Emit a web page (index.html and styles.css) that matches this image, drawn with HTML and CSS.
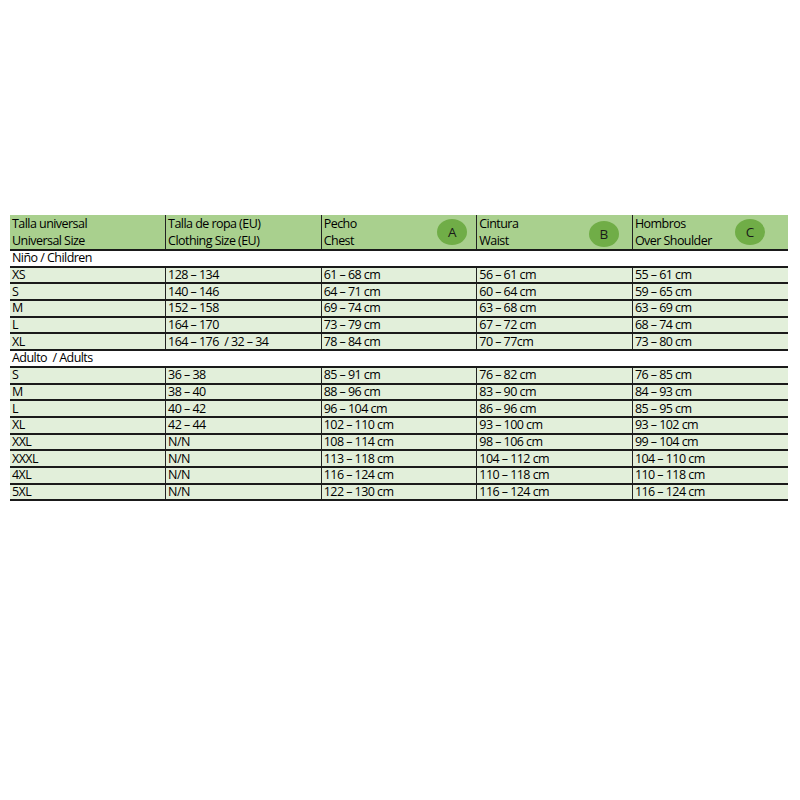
FILE: index.html
```
<!DOCTYPE html>
<html>
<head>
<meta charset="utf-8">
<link rel="stylesheet" href="styles.css">
</head>
<body>
<div class="page">
<table class="sizes">
<colgroup><col class="c"><col class="c"><col class="c"><col class="c"><col class="c"></colgroup>
<thead>
<tr class="head">
<th><div class="hc"><div class="ht">Talla universal<br>Universal Size</div></div></th>
<th class="vl"><div class="hc"><div class="ht">Talla de ropa (EU)<br>Clothing Size (EU)</div></div></th>
<th class="vl"><div class="hc"><div class="ht">Pecho<br>Chest</div><span class="dot da">A</span></div></th>
<th class="vl"><div class="hc"><div class="ht">Cintura<br>Waist</div><span class="dot db">B</span></div></th>
<th class="vl"><div class="hc"><div class="ht">Hombros<br>Over Shoulder</div><span class="dot dc">C</span></div></th>
</tr>
</thead>
<tbody>
<tr class="label"><td colspan="5">Niño / Children</td></tr>
<tr><td>XS</td><td class="vl">128 – 134</td><td class="vl">61 – 68 cm</td><td class="vl">56 – 61 cm</td><td class="vl">55 – 61 cm</td></tr>
<tr><td>S</td><td class="vl">140 – 146</td><td class="vl">64 – 71 cm</td><td class="vl">60 – 64 cm</td><td class="vl">59 – 65 cm</td></tr>
<tr><td>M</td><td class="vl">152 – 158</td><td class="vl">69 – 74 cm</td><td class="vl">63 – 68 cm</td><td class="vl">63 – 69 cm</td></tr>
<tr><td>L</td><td class="vl">164 – 170</td><td class="vl">73 – 79 cm</td><td class="vl">67 – 72 cm</td><td class="vl">68 – 74 cm</td></tr>
<tr><td>XL</td><td class="vl">164 – 176 &nbsp;/ 32 – 34</td><td class="vl">78 – 84 cm</td><td class="vl">70 – 77cm</td><td class="vl">73 – 80 cm</td></tr>
<tr class="label"><td colspan="5">Adulto &nbsp;/ Adults</td></tr>
<tr><td>S</td><td class="vl">36 – 38</td><td class="vl">85 – 91 cm</td><td class="vl">76 – 82 cm</td><td class="vl">76 – 85 cm</td></tr>
<tr><td>M</td><td class="vl">38 – 40</td><td class="vl">88 – 96 cm</td><td class="vl">83 – 90 cm</td><td class="vl">84 – 93 cm</td></tr>
<tr><td>L</td><td class="vl">40 – 42</td><td class="vl">96 – 104 cm</td><td class="vl">86 – 96 cm</td><td class="vl">85 – 95 cm</td></tr>
<tr><td>XL</td><td class="vl">42 – 44</td><td class="vl">102 – 110 cm</td><td class="vl">93 – 100 cm</td><td class="vl">93 – 102 cm</td></tr>
<tr><td>XXL</td><td class="vl">N/N</td><td class="vl">108 – 114 cm</td><td class="vl">98 – 106 cm</td><td class="vl">99 – 104 cm</td></tr>
<tr><td>XXXL</td><td class="vl">N/N</td><td class="vl">113 – 118 cm</td><td class="vl">104 – 112 cm</td><td class="vl">104 – 110 cm</td></tr>
<tr><td>4XL</td><td class="vl">N/N</td><td class="vl">116 – 124 cm</td><td class="vl">110 – 118 cm</td><td class="vl">110 – 118 cm</td></tr>
<tr><td>5XL</td><td class="vl">N/N</td><td class="vl">122 – 130 cm</td><td class="vl">116 – 124 cm</td><td class="vl">116 – 124 cm</td></tr>
</tbody>
</table>
</div>
</body>
</html>
```
FILE: styles.css
```
html, body {
  margin: 0;
  padding: 0;
  background: #ffffff;
}
.page {
  padding: 215px 0 0 10px;
}
.sizes {
  width: 778px;
  border-collapse: collapse;
  table-layout: fixed;
  font-family: "Open Sans", "Noto Sans", sans-serif;
  font-size: 12.5px;
  letter-spacing: -0.55px;
  color: #000000;
}
.c {
  width: 20%;
}
.sizes th, .sizes td {
  padding: 0 0 0 2px;
  text-align: left;
  font-weight: normal;
  border-bottom: 2px solid #1a1a1a;
  vertical-align: middle;
  white-space: nowrap;
}
.head th {
  background: #a9d08e;
  height: 33px;
  line-height: 16px;
}
.vl {
  border-left: 1px solid #222;
}
.hc {
  display: flex;
  align-items: center;
  justify-content: space-between;
}
.ht {
  line-height: 16.5px;
  padding-top: 1px;
}
.dot {
  width: 30px;
  height: 26px;
  border-radius: 50%;
  background: #70ad47;
  display: flex;
  align-items: center;
  justify-content: center;
  font-size: 13.5px;
  letter-spacing: 0;
  color: #1a1a1a;
}
.da { margin-right: 9px; }
.db { margin-right: 13px; margin-top: 4px; }
.dc { margin-right: 23px; }
.sizes tbody td {
  background: #e2efda;
  height: 14.7px;
  line-height: 14px;
}
.sizes tbody tr.label td {
  background: #ffffff;
}
```
